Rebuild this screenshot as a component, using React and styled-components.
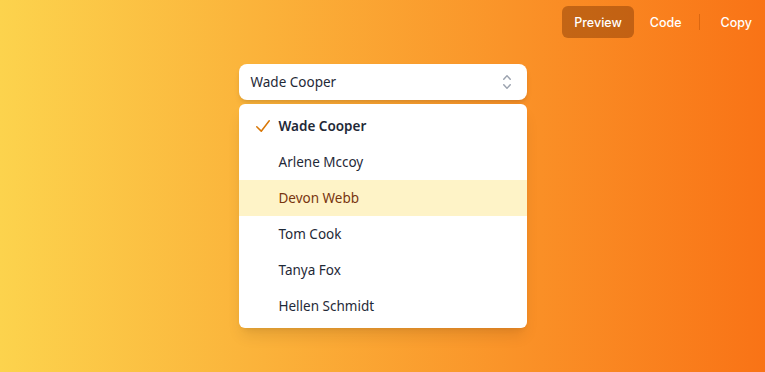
import styled, { createGlobalStyle } from "styled-components";

const GlobalStyle = createGlobalStyle`
  html, body {
    margin: 0;
    padding: 0;
  }
  body {
    font-family: "Segoe UI", "Noto Sans", "Open Sans", sans-serif;
  }
`;

const people = [
  "Wade Cooper",
  "Arlene Mccoy",
  "Devon Webb",
  "Tom Cook",
  "Tanya Fox",
  "Hellen Schmidt",
];

const Page = styled.div`
  width: 765px;
  height: 372px;
  background: linear-gradient(to right, #fcd34d, #f97316);
  box-sizing: border-box;
  display: flex;
  flex-direction: column;
`;

const Toolbar = styled.div`
  display: flex;
  justify-content: flex-end;
  align-items: center;
  gap: 4px;
  padding: 6px 1px 0 0;
  height: 32px;
`;

const ToolButton = styled.button`
  font-family: Inter, "Noto Sans", sans-serif;
  font-size: 12.5px;
  font-weight: 500;
  color: #fff;
  border: none;
  border-radius: 6px;
  height: 32px;
  padding: 0 12px;
  background: ${(p) => (p.$active ? "rgba(150, 70, 10, 0.55)" : "transparent")};
  cursor: pointer;
`;

const Divider = styled.span`
  width: 1px;
  height: 16px;
  background: rgba(200, 90, 10, 0.6);
  margin: 0 5px 0 1px;
`;

const Center = styled.div`
  display: flex;
  justify-content: center;
  padding-top: 26px;
`;

const Listbox = styled.div`
  width: 288px;
  position: relative;
`;

const SelectButton = styled.button`
  width: 100%;
  height: 36px;
  background: #fff;
  border: none;
  border-radius: 8px;
  box-shadow: 0 4px 6px -1px rgba(0, 0, 0, 0.1), 0 2px 4px -2px rgba(0, 0, 0, 0.1);
  display: flex;
  align-items: center;
  justify-content: space-between;
  padding: 0 10px 0 12px;
  font-family: inherit;
  font-size: 13.5px;
  color: #1f2937;
  box-sizing: border-box;
`;

const Options = styled.ul`
  margin: 4px 0 0;
  padding: 4px 0;
  list-style: none;
  background: #fff;
  border-radius: 6px;
  box-shadow: 0 10px 15px -3px rgba(0, 0, 0, 0.1), 0 4px 6px -4px rgba(0, 0, 0, 0.1);
`;

const Option = styled.li`
  position: relative;
  height: 36px;
  display: flex;
  align-items: center;
  padding-left: 40px;
  font-size: 13.5px;
  font-weight: ${(p) => (p.$selected ? 600 : 400)};
  color: ${(p) => (p.$active ? "#78350f" : "#1f2937")};
  background: ${(p) => (p.$active ? "#fef3c7" : "transparent")};
`;

const CheckMark = styled.span`
  position: absolute;
  left: 14px;
  top: 0;
  bottom: 0;
  display: flex;
  align-items: center;
  color: #d97706;
`;

const ChevronUpDown = () => (
  <svg width="20" height="20" viewBox="0 0 20 20" fill="#9ca3af">
    <path
      fillRule="evenodd"
      d="M10 3a.75.75 0 01.55.24l3.25 3.5a.75.75 0 11-1.1 1.02L10 4.852 7.3 7.76a.75.75 0 01-1.1-1.02l3.25-3.5A.75.75 0 0110 3zm-3.76 9.2a.75.75 0 011.06.04l2.7 2.908 2.7-2.908a.75.75 0 111.1 1.02l-3.25 3.5a.75.75 0 01-1.1 0l-3.25-3.5a.75.75 0 01.04-1.06z"
      clipRule="evenodd"
    />
  </svg>
);

const Check = () => (
  <svg width="20" height="20" viewBox="0 0 20 20" fill="currentColor">
    <path
      fillRule="evenodd"
      d="M16.704 4.153a.75.75 0 01.143 1.052l-8 10.5a.75.75 0 01-1.127.075l-4.5-4.5a.75.75 0 011.06-1.06l3.894 3.893 7.48-9.817a.75.75 0 011.05-.143z"
      clipRule="evenodd"
    />
  </svg>
);

export default function App() {
  return (
    <Page>
      <GlobalStyle />
      <Toolbar>
        <ToolButton $active>Preview</ToolButton>
        <ToolButton>Code</ToolButton>
        <Divider />
        <ToolButton>Copy</ToolButton>
      </Toolbar>
      <Center>
        <Listbox>
          <SelectButton>
            <span>Wade Cooper</span>
            <ChevronUpDown />
          </SelectButton>
          <Options>
            {people.map((name, i) => (
              <Option key={name} $selected={i === 0} $active={i === 2}>
                {i === 0 && (
                  <CheckMark>
                    <Check />
                  </CheckMark>
                )}
                {name}
              </Option>
            ))}
          </Options>
        </Listbox>
      </Center>
    </Page>
  );
}
